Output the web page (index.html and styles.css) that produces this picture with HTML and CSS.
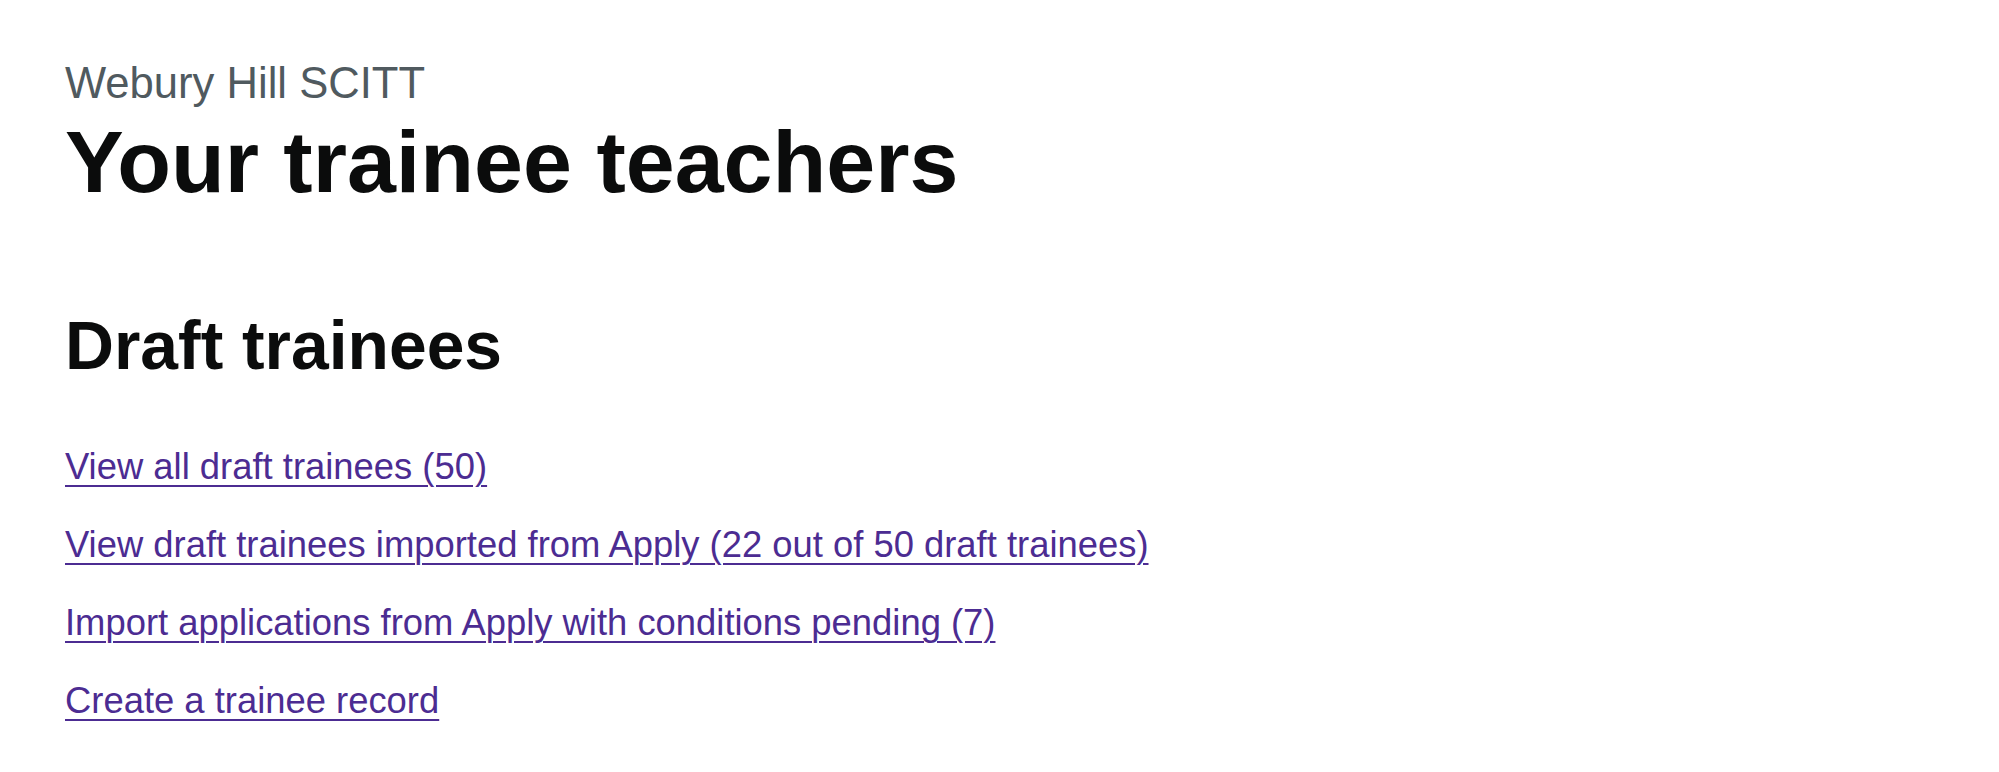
FILE: index.html
```html
<!DOCTYPE html>
<html lang="en">
<head>
<meta charset="utf-8">
<title>Your trainee teachers</title>
<link rel="stylesheet" href="styles.css">
</head>
<body>
<main class="page">
  <header class="page-header">
    <span class="caption">Webury Hill SCITT</span>
    <h1 class="title">Your trainee teachers</h1>
  </header>
  <section class="drafts">
    <h2 class="heading">Draft trainees</h2>
    <ul class="link-list">
      <li><a class="link" href="#">View all draft trainees (50)</a></li>
      <li><a class="link" href="#">View draft trainees imported from Apply (22 out of 50 draft trainees)</a></li>
      <li><a class="link" href="#">Import applications from Apply with conditions pending (7)</a></li>
      <li><a class="link" href="#">Create a trainee record</a></li>
    </ul>
  </section>
</main>
</body>
</html>
```

FILE: styles.css
```css
html, body {
  margin: 0;
  padding: 0;
  background: #ffffff;
}

body {
  font-family: "Liberation Sans", Arial, sans-serif;
  color: #0b0c0c;
}

.page {
  display: flex;
  flex-direction: column;
  padding: 58px 0 0 65px;
}

.page-header {
  display: flex;
  flex-direction: column;
  gap: 4px;
}

.caption {
  display: block;
  font-size: 43.6px;
  line-height: 50px;
  color: #505a5f;
}

.title {
  margin: 0;
  font-size: 88px;
  line-height: 100px;
  font-weight: 700;
  color: #0b0c0c;
}

.drafts {
  display: flex;
  flex-direction: column;
  padding-top: 94px;
}

.heading {
  margin: 0;
  font-size: 67.8px;
  line-height: 80px;
  font-weight: 700;
  color: #0b0c0c;
}

.link-list {
  list-style: none;
  margin: 0;
  padding: 56px 0 0 0;
  display: flex;
  flex-direction: column;
  gap: 28px;
}

.link-list li {
  font-size: 36.4px;
  line-height: 50px;
}

.link {
  color: #4c2c92;
  text-decoration: underline;
  text-decoration-thickness: 2px;
  text-underline-offset: 6px;
}
```
